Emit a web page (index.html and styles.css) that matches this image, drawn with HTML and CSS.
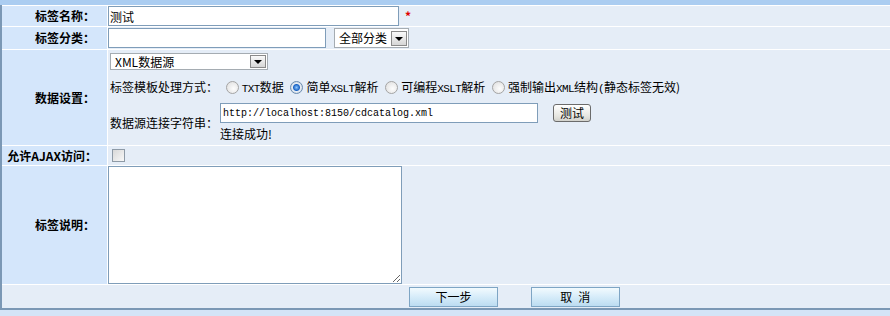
FILE: index.html
```html
<!DOCTYPE html>
<html>
<head>
  <meta charset="utf-8">
  <title>标签设置</title>
  <link rel="stylesheet" href="styles.css">
</head>
<body>
<div class="topbar"></div>
<table class="form">
  <tr class="r1">
    <th>标签名称：</th>
    <td><div class="line"><input class="txt name" value="测试"><span class="req">*</span></div></td>
  </tr>
  <tr class="r2">
    <th>标签分类：</th>
    <td>
      <div class="line">
        <input class="txt cat">
        <span class="sel sel-cat"><span class="sel-text">全部分类</span><span class="sel-btn"></span></span>
      </div>
    </td>
  </tr>
  <tr class="r3">
    <th>数据设置：</th>
    <td class="data">
      <span class="sel sel-src"><span class="sel-text">XML数据源</span><span class="sel-btn"></span></span>
      <div class="mode">
        <span>标签模板处理方式：</span>
        <label class="opt"><span class="radio"></span><span class="en">TXT</span>数据</label>
        <label class="opt"><span class="radio on"></span>简单<span class="en">XSLT</span>解析</label>
        <label class="opt"><span class="radio"></span>可编程<span class="en">XSLT</span>解析</label>
        <label class="opt"><span class="radio"></span>强制输出<span class="en">XML</span>结构<span class="en">(</span>静态标签无效)</label>
      </div>
      <div class="conn">
        <span class="conn-label">数据源连接字符串：</span>
        <div class="conn-box">
          <div class="conn-line">
            <input class="txt url" value="http://localhost:8150/cdcatalog.xml">
            <button class="btn-test">测试</button>
          </div>
          <div class="ok">连接成功!</div>
        </div>
      </div>
    </td>
  </tr>
  <tr class="r4">
    <th>允许AJAX访问：</th>
    <td><span class="check"></span></td>
  </tr>
  <tr class="r5">
    <th>标签说明：</th>
    <td><textarea class="memo"></textarea></td>
  </tr>
  <tr class="r6">
    <td colspan="2" class="actions">
      <button class="btn">下一步</button>
      <button class="btn">取&ensp;消</button>
    </td>
  </tr>
</table>
</body>
</html>
```

FILE: styles.css
```css
body {
    margin: 0;
    background-color: #d4e4f7;
    font-family: "Noto Sans CJK SC", sans-serif;
    font-size: 12px;
    color: #000;
}

.topbar {
    height: 5px;
    background-color: #abcdf1;
}

.form {
    width: 100%;
    border-collapse: separate;
    border-spacing: 0;
    border-left: 2px solid #7b98b5;
    border-bottom: 2px solid #7b98b5;
}

.form th,
.form td {
    box-sizing: border-box;
    padding: 0;
    border-top: 1px solid #fff;
    background-color: #e5edf7;
    line-height: 16px;
}

.form th {
    width: 106px;
    padding-right: 12px;
    text-align: right;
    font-weight: bold;
    background-color: #d4e6fb;
    border-right: 1px solid #fff;
}

.r1 th, .r1 td { height: 21px; }
.r2 th, .r2 td { height: 23px; }
.r3 th, .r3 td { height: 96px; }
.r4 th, .r4 td { height: 20px; }
.r5 th, .r5 td { height: 119px; }
.r6 td { height: 24px; }

.r4 th {
    padding-right: 10px;
}

.line {
    display: flex;
    align-items: center;
}

.txt {
    box-sizing: border-box;
    height: 20px;
    margin: 0;
    padding: 0 1px;
    border: 1px solid #7f9db9;
    background: #fff;
    font-family: "Noto Sans CJK SC", sans-serif;
    font-size: 12px;
    color: #000;
    outline: none;
}

.name { width: 291px; }
.cat { width: 218px; }

.req {
    margin-left: 6px;
    color: #e00000;
    font-weight: bold;
}

/* fake select boxes */
.sel {
    box-sizing: border-box;
    display: flex;
    align-items: center;
    justify-content: space-between;
    border: 1px solid #a5acb2;
    background: #fff;
    padding: 1px;
}

.sel-text {
    padding-left: 3px;
    line-height: 14px;
}

.sel-btn {
    position: relative;
    box-sizing: border-box;
    width: 16px;
    height: 15px;
    border: 1px solid #8a8a8a;
    background: linear-gradient(#fafafa, #d6d6d6);
}

.sel-btn::after {
    content: '';
    position: absolute;
    left: 3px;
    top: 5px;
    border-left: 4px solid transparent;
    border-right: 4px solid transparent;
    border-top: 4px solid #000;
}

.sel-cat {
    width: 75px;
    height: 20px;
    margin-left: 8px;
}

.sel-src {
    width: 158px;
    height: 17px;
    margin-top: 3px;
}

.sel-src .sel-btn {
    height: 13px;
}

.sel-src .sel-btn::after {
    top: 4px;
}

.r3 td.data {
    vertical-align: top;
    padding-left: 2px;
}

.mode {
    height: 18px;
    margin-top: 8px;
    line-height: 18px;
    white-space: nowrap;
}

.opt {
    display: inline-block;
    margin-left: 4px;
}

.mode > span:first-child + .opt {
    margin-left: 5px;
}

/* latin bits in the option labels are narrow fixed-width */
.en {
    font-family: "Liberation Mono", monospace;
    font-size: 11px;
    letter-spacing: -0.6px;
}

.radio {
    display: inline-block;
    box-sizing: border-box;
    width: 13px;
    height: 13px;
    margin-right: 3px;
    vertical-align: -2px;
    border: 1px solid #a4a4a4;
    border-radius: 50%;
    background: radial-gradient(circle at 60% 60%, #fdfdfd, #dcdcdc);
}

.radio.on {
    border-color: #6a8cb0;
    background: radial-gradient(circle, #8fc8ff 0, #1c64c4 3px, #e8eef5 4px, #cfd7e0 6px);
}

.conn {
    display: flex;
    align-items: center;
    margin-top: 7px;
}

.conn-label {
    width: 110px;
}

.conn-line {
    display: flex;
    align-items: center;
}

.url {
    width: 318px;
    font-family: "Liberation Mono", monospace;
    font-size: 10px;
    padding-left: 2px;
}

.btn-test {
    box-sizing: border-box;
    width: 38px;
    height: 18px;
    margin-left: 15px;
    padding: 0;
    border: 1px solid #6b6b6b;
    border-radius: 3px;
    background: linear-gradient(#ffffff, #e6e6e0 70%, #d2d2cc);
    font-family: "Noto Sans CJK SC", sans-serif;
    font-size: 12px;
    line-height: 14px;
    color: #000;
}

.ok {
    margin-top: 2px;
    line-height: 18px;
}

.check {
    display: block;
    box-sizing: border-box;
    width: 13px;
    height: 13px;
    margin-left: 4px;
    border: 1px solid #8e9aa6;
    background: linear-gradient(135deg, #d8d8d8, #f8f8f8);
}

.r5 td {
    vertical-align: top;
}

.memo {
    display: block;
    box-sizing: border-box;
    width: 294px;
    height: 118px;
    margin: 0;
    border: 1px solid #7f9db9;
    background: #fff;
    outline: none;
}

.actions {
    padding-left: 407px !important;
}

.btn {
    box-sizing: border-box;
    width: 89px;
    height: 20px;
    margin: 0 30px 0 0;
    padding: 0;
    border: 1px solid #7ea5c4;
    background: linear-gradient(#f2fafe, #d6ecf9 50%, #bcdcf1);
    font-family: "Noto Sans CJK SC", sans-serif;
    font-size: 12px;
    line-height: 16px;
    color: #000;
    vertical-align: middle;
}
```
